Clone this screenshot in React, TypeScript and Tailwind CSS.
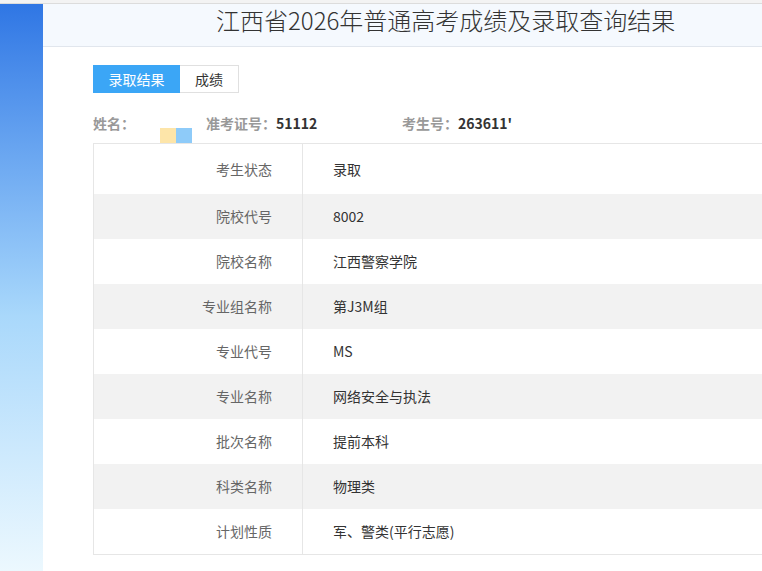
const rows = [
  { label: "考生状态", value: "录取" },
  { label: "院校代号", value: "8002" },
  { label: "院校名称", value: "江西警察学院" },
  { label: "专业组名称", value: "第J3M组" },
  { label: "专业代号", value: "MS" },
  { label: "专业名称", value: "网络安全与执法" },
  { label: "批次名称", value: "提前本科" },
  { label: "科类名称", value: "物理类" },
  { label: "计划性质", value: "军、警类(平行志愿)" },
];

export default function App() {
  return (
    <div className="flex h-[571px] w-[762px] flex-col overflow-hidden bg-white font-['Noto_Sans_CJK_SC',sans-serif]">
      <div className="h-[4px] border-b border-[#dcdcdc] bg-[#f3f3f3]" />

      <div className="flex flex-1">
        <div className="w-[43px] shrink-0 bg-gradient-to-b from-[#2f76e4] via-[#a9d8fb] via-55% to-[#ecf8fe]" />

        <div className="flex-1">
          <div className="h-[43px] border-b border-[#e1e6ed] bg-[#f5f9fe] pl-[173px]">
            <h1 className="whitespace-nowrap text-[24px] font-light leading-[32px] text-[#333]">
              江西省2026年普通高考成绩及录取查询结果
            </h1>
          </div>

          <div className="pl-[50px]">
            <div className="mt-[18px] flex h-[28px] text-[14px]">
              <div className="flex w-[87px] items-center justify-center bg-[#3ba6f6] text-white">
                录取结果
              </div>
              <div className="flex w-[59px] items-center justify-center border border-l-0 border-[#e0e0e0] text-[#333]">
                成绩
              </div>
            </div>

            <div className="relative mt-[20px] flex h-[20px] items-center whitespace-nowrap text-[14px] font-bold leading-[20px]">
              <div className="w-[113px] text-[#999]">姓名：</div>
              <div className="w-[196px]">
                <span className="text-[#999]">准考证号：</span>
                <span className="text-[#333]">51112</span>
              </div>
              <div>
                <span className="text-[#999]">考生号：</span>
                <span className="text-[#333]">263611'</span>
              </div>
              <div className="absolute left-[67px] top-[15px] flex">
                <div className="h-[15px] w-[16px] bg-[#fde5a9]" />
                <div className="h-[15px] w-[16px] bg-[#8ecbf9]" />
              </div>
            </div>

            <div className="mt-[10px] w-[760px] border border-[#e6e6e6] text-[14px]">
              {rows.map((row, i) => (
                <div
                  key={row.label}
                  className={`flex ${i === 0 ? "h-[50px]" : "h-[45px]"} ${i % 2 === 1 ? "bg-[#f2f2f2]" : "bg-white"}`}
                >
                  <div className="flex w-[209px] items-center justify-end border-r border-[#e6e6e6] pr-[30px] text-[#666]">
                    {row.label}
                  </div>
                  <div className="flex items-center pl-[30px] text-[#333]">{row.value}</div>
                </div>
              ))}
            </div>
          </div>
        </div>
      </div>
    </div>
  );
}
